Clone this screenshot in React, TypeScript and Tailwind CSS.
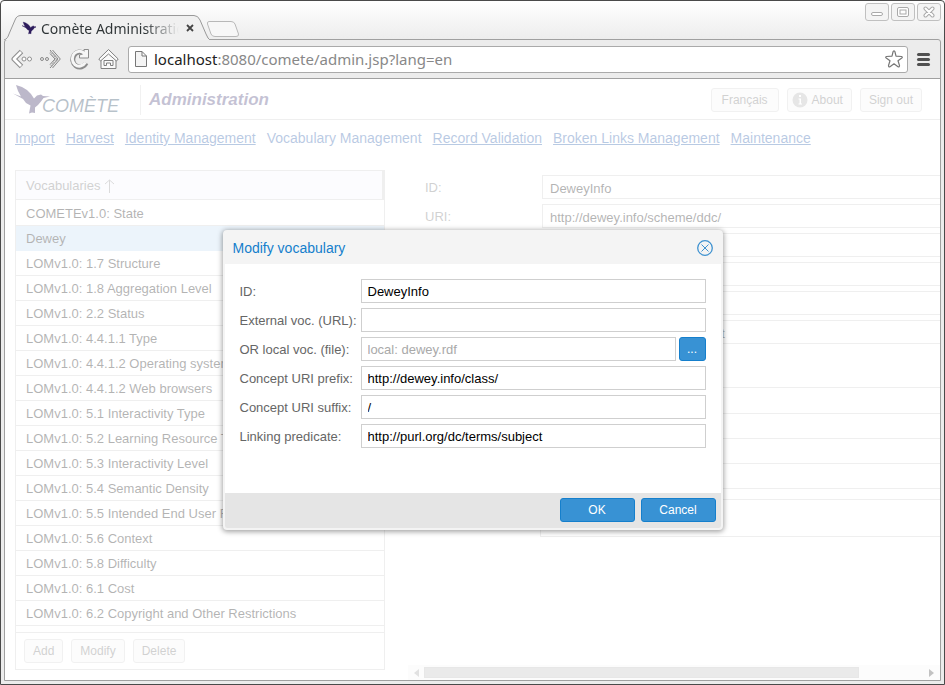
import type { ReactNode } from "react";

const BIRD =
  "M3 0 L9 2 L14 5 L18 9 L21 13.500 L24 10.500 L28 9.500 L30 11 L37 11.500 L30.500 13 L28 16.500 L25 20 L22 22.500 L22 28 L19 27.500 L16 28.500 L17.500 20.500 L13 18 L10 14 L0 8.500 L8 11.500 L5 6 Z";

const vocabularies = [
  "COMETEv1.0: State",
  "Dewey",
  "LOMv1.0: 1.7 Structure",
  "LOMv1.0: 1.8 Aggregation Level",
  "LOMv1.0: 2.2 Status",
  "LOMv1.0: 4.4.1.1 Type",
  "LOMv1.0: 4.4.1.2 Operating systems",
  "LOMv1.0: 4.4.1.2 Web browsers",
  "LOMv1.0: 5.1 Interactivity Type",
  "LOMv1.0: 5.2 Learning Resource Type",
  "LOMv1.0: 5.3 Interactivity Level",
  "LOMv1.0: 5.4 Semantic Density",
  "LOMv1.0: 5.5 Intended End User Role",
  "LOMv1.0: 5.6 Context",
  "LOMv1.0: 5.8 Difficulty",
  "LOMv1.0: 6.1 Cost",
  "LOMv1.0: 6.2 Copyright and Other Restrictions",
];

const sections = [
  "Import",
  "Harvest",
  "Identity Management",
  "Vocabulary Management",
  "Record Validation",
  "Broken Links Management",
  "Maintenance",
];

const details = [
  { id: "d-id", label: "ID:", value: "DeweyInfo" },
  { id: "d-uri", label: "URI:", value: "http://dewey.info/scheme/ddc/" },
  { id: "d-source", label: "Source:", value: "" },
  { id: "d-prefix", label: "Prefix:", value: "" },
  { id: "d-suffix", label: "Suffix:", value: "" },
  { id: "d-link", label: "Linking:", value: "http://purl.org/dc/terms/subject" },
];

function SoftButton({ children, className = "px-2" }: { children: ReactNode; className?: string }) {
  return (
    <button className={`flex h-6 items-center gap-1 rounded-[3px] border border-[#cfcfcf] bg-[#f4f4f4] text-[12px] text-[#666] ${className}`}>
      {children}
    </button>
  );
}

function BlueButton({ children, className }: { children: ReactNode; className: string }) {
  return (
    <button
      type="button"
      className={`h-6 shrink-0 rounded-[3px] border border-[#157fcc] bg-[#3892d4] text-center text-[12px] leading-[22px] text-white ${className}`}
    >
      {children}
    </button>
  );
}

function FieldRow({ id, label, children }: { id: string; label: string; children: ReactNode }) {
  return (
    <div className="flex h-6 items-center">
      <label htmlFor={id} className="w-[121px] shrink-0 pt-0.5 text-[13px] whitespace-nowrap text-[#666]">
        {label}
      </label>
      {children}
    </div>
  );
}

const fieldClass = "h-6 min-w-0 flex-1 border border-[#cfcfcf] bg-white px-1.5 pt-0.5 text-[13px] text-black";
const windowButton = "flex h-[18px] w-6 items-center justify-center rounded-[3px] border border-[#c0c0c0] bg-[#f4f4f4]";

function TitleBar() {
  return (
    <div className="flex h-[38px] shrink-0 items-start justify-between">
      <div className="flex h-[38px] items-end">
        <div className="relative h-6 w-[202px]">
          <svg className="absolute inset-0" width="205" height="25" viewBox="0 0 205 25" fill="none">
            <path d="M0 25 C3 24 4 22 5 19 L11 5 Q12.500 .5 17 .5 H190 Q194 .5 196 5 L202 19 Q204 24 206 25 Z" fill="#f0f0f0" />
            <path d="M0 25 C3 24 4 22 5 19 L11 5 Q12.500 .5 17 .5 H190 Q194 .5 196 5 L202 19 Q204 24 206 25" stroke="#999" />
          </svg>
          <div className="relative flex h-[26px] items-center pl-[18px]">
            <svg width="14" height="15" viewBox="0 0 34 31">
              <path d={BIRD} fill="#2d1c5c" stroke="#2d1c5c" />
            </svg>
            <span className="ml-[5px] w-[138px] overflow-hidden bg-linear-to-r from-[#2e3436] from-75% to-transparent bg-clip-text font-['Noto_Sans',sans-serif] text-[14px] whitespace-nowrap text-transparent">
              Comète Administration
            </span>
            <button aria-label="Close tab" className="ml-[7px]">
              <svg width="8" height="8" viewBox="0 0 8 8" stroke="#444" strokeWidth="1.800">
                <path d="M1 1 L7 7 M7 1 L1 7" />
              </svg>
            </button>
          </div>
        </div>
        <button aria-label="New tab" className="mb-px">
          <svg width="34" height="17" viewBox="0 0 34 17">
            <path d="M3 .5 H25 Q28 .5 29 3 L32.500 13 Q33 15.500 30 15.500 H9 Q6 15.500 5 13 L1.500 3 Q1 .5 3 .5Z" fill="#f7f7f7" stroke="#b8b8b8" />
          </svg>
        </button>
      </div>
      <div className="flex gap-0.5 pt-0.5">
        <button aria-label="Minimize" className={windowButton}>
          <svg width="12" height="12" fill="#fff" stroke="#aaa"><rect x=".5" y="6.500" width="11" height="3" rx="1.500" /></svg>
        </button>
        <button aria-label="Maximize" className={windowButton}>
          <svg width="12" height="12" fill="#fff" stroke="#aaa"><rect x=".5" y="1.500" width="11" height="9" rx="1.500" /><rect x="3" y="4" width="6" height="4" /></svg>
        </button>
        <button aria-label="Close" className={windowButton}>
          <svg width="12" height="12" strokeLinecap="round"><path d="M2.500 2.500 L9.500 9.500 M9.500 2.500 L2.500 9.500" stroke="#aaa" strokeWidth="4" /><path d="M2.500 2.500 L9.500 9.500 M9.500 2.500 L2.500 9.500" stroke="#fff" strokeWidth="2" /></svg>
        </button>
      </div>
    </div>
  );
}

function Toolbar() {
  return (
    <div className="flex h-[39px] shrink-0 items-center border-b border-[#a0a0a0] pr-2.5 pl-1.5">
      <div className="flex gap-2">
        <button aria-label="Back">
          <svg width="21" height="22" viewBox="0 0 21 22" fill="none" strokeLinejoin="round">
            <path d="M10.500 3.500 L3 11 L10.500 18.500" stroke="#909090" strokeWidth="5" />
            <path d="M10 4 L3 11 L10 18" stroke="#fff" strokeWidth="2.800" />
            <circle cx="13" cy="11" r="2" fill="#fff" stroke="#909090" />
            <circle cx="18.500" cy="11" r="2" fill="#fff" stroke="#909090" />
          </svg>
        </button>
        <button aria-label="Forward">
          <svg width="21" height="22" viewBox="0 0 21 22" fill="none">
            <path d="M10 2 L18 11 L10 20 M12.500 2 L20.300 11 L12.500 20" stroke="#858585" />
            <path d="M10 5.500 L15 11 L10 16.500" stroke="#858585" />
            <path d="M10.500 3.500 L17 11 L10.500 18.500" stroke="#a8a8a8" strokeWidth="2.500" strokeDasharray="1 1" />
            <circle cx="2" cy="11" r="1.500" stroke="#888" />
            <circle cx="7" cy="11" r="1.500" stroke="#888" />
          </svg>
        </button>
        <button aria-label="Reload">
          <svg width="21" height="22" viewBox="0 0 21 22" fill="none">
            <path d="M15.500 6 A7 7.500 0 1 0 17 15" stroke="#8c8c8c" strokeWidth="5" />
            <path d="M15 1.500 H19.500 V10 H10.500 V7 L15 5.500Z" fill="#f6f6f6" stroke="#8c8c8c" />
            <path d="M16 6.300 A7 7.500 0 1 0 16.300 14.600" stroke="#f6f6f6" strokeWidth="3" />
          </svg>
        </button>
        <button aria-label="Home">
          <svg width="21" height="22" viewBox="0 0 21 22" fill="#fafafa" stroke="#808080" strokeLinejoin="round">
            <path d="M3 11 V20.500 H18 V11 L10.500 5Z" />
            <path d="M10.500 1.500 L.8 11 L2.500 13 L10.500 6 L18.500 13 L20.200 11Z" />
            <path d="M6 17.500 V12.500 H15 V17.500 H12.500 V15 H8.500 V17.500Z" />
          </svg>
        </button>
      </div>
      <div className="ml-[9px] flex h-[27px] min-w-0 flex-1 items-center rounded-[3px] border border-[#aaa] bg-white pr-1 pl-1.5">
        <svg width="12" height="16" viewBox="0 0 12 16" fill="#f4f4f4" stroke="#777"><path d="M.5 .5 H7 L11.500 5 V15.500 H.5Z M7 .5 V5 H11.500" /></svg>
        <span className="ml-[7px] flex-1 font-['Noto_Sans',sans-serif] text-[15px] text-[#888]">
          <span className="text-[#222]">localhost</span>:8080/comete/admin.jsp?lang=en
        </span>
        <button aria-label="Bookmark">
          <svg width="18" height="18" viewBox="0 0 18 18" fill="#fff" stroke="#777" strokeWidth="1.200" strokeLinejoin="round"><path d="M9 .8 Q9.800 .8 10 2 L11 6.200 L16.500 6.500 Q18 7 16.800 8 L13 10.800 L14.500 15.500 Q14.500 17.400 13 16.700 L9 13.800 L5 16.700 Q3.500 17.400 3.500 15.500 L5 10.800 L1.200 8 Q0 7 1.500 6.500 L7 6.200 L8 2 Q8.200 .8 9 .8Z" /></svg>
        </button>
      </div>
      <button aria-label="Menu" className="ml-[9px] flex w-[13px] flex-col gap-0.5">
        <span className="h-[3px] w-full rounded-sm bg-[#505050]" />
        <span className="h-[3px] w-full rounded-sm bg-[#505050]" />
        <span className="h-[3px] w-full rounded-sm bg-[#505050]" />
      </button>
    </div>
  );
}

function VocabularyPanel() {
  return (
    <section className="flex h-[500px] w-[370px] shrink-0 flex-col border border-[#c8c8c8]">
      <h2 className="flex h-[29px] shrink-0 items-center gap-1 border-r-2 border-b border-[#c8c8c8] bg-[#f3f5fc] px-2.5 pt-px text-[13px] text-[#666]">
        Vocabularies
        <svg width="10" height="14" fill="none" stroke="#888"><path d="M5.500 14 V1 M1 5 L5.500 1 L10 5" /></svg>
      </h2>
      <ul className="flex-1 pt-px text-[13px]">
        {vocabularies.map((name) => (
          <li
            key={name}
            className={`h-[25px] border-b px-2.5 leading-[25px] ${name === "Dewey" ? "border-[#c0daf2] bg-[#c0daf2]" : "border-[#c8c8c8]"}`}
          >
            {name}
          </li>
        ))}
      </ul>
      <div className="flex h-[37px] shrink-0 items-center gap-2 border-t border-[#c8c8c8] px-2">
        <SoftButton>Add</SoftButton>
        <SoftButton>Modify</SoftButton>
        <SoftButton>Delete</SoftButton>
      </div>
    </section>
  );
}

function HorizontalScrollbar() {
  return (
    <div className="flex h-[15px] shrink-0 items-center bg-[#f3f3f3] px-1.5">
      <svg width="5" height="8" fill="#999"><path d="M5 0 V8 L0 4Z" /></svg>
      <div className="mx-[5px] flex-1">
        <div className="h-[11px] w-[87%] border border-[#b0b0b0] bg-[#bababa]" />
      </div>
      <svg width="5" height="8" fill="#333"><path d="M0 0 V8 L5 4Z" /></svg>
    </div>
  );
}

function Details() {
  return (
    <section className="flex min-w-0 flex-1 flex-col overflow-hidden">
      <div className="flex min-h-0 flex-1 flex-col overflow-hidden pl-[17px]">
        <div className="flex shrink-0 flex-col gap-[5px] pt-[5px]">
          {details.map((d) => (
            <div key={d.id} className="flex h-6 items-center">
              <label htmlFor={d.id} className="w-[117px] shrink-0 pt-0.5 text-[13px] text-[#666]">{d.label}</label>
              <input
                id={d.id}
                readOnly
                defaultValue={d.value}
                className="h-6 w-[600px] shrink-0 border border-[#c8c8c8] px-[7px] pt-0.5 text-[13px]"
              />
            </div>
          ))}
        </div>
        <div className="mt-[43px] ml-[115px] h-[150px] w-[602px] shrink-0 border border-[#c8c8c8]">
          <div className="h-[26px] border-b border-[#c8c8c8]" />
          <div className="h-[25px] border-b border-[#c8c8c8]" />
          <div className="h-[25px] border-b border-[#c8c8c8]" />
          <div className="h-[25px] border-b border-[#c8c8c8]" />
          <div className="h-[11px] border-b border-[#c8c8c8]" />
        </div>
      </div>
      <HorizontalScrollbar />
    </section>
  );
}

function Dialog() {
  return (
    <div
      role="dialog"
      aria-label="Modify vocabulary"
      className="flex h-[300px] w-[500px] flex-col overflow-hidden rounded-[4px] border-2 border-[#f4f4f4] bg-white shadow-[0_1px_5px_1px_rgba(0,0,0,0.35)]"
    >
      <div className="flex h-8 shrink-0 items-center justify-between bg-[#f4f4f4] px-2">
        <h2 className="pt-px text-[14px] text-[#157fcc]">Modify vocabulary</h2>
        <button aria-label="Close dialog">
          <svg width="16" height="16" viewBox="0 0 16 16" fill="none" stroke="#3f92d0"><circle cx="8" cy="8" r="7.300" strokeWidth="1.300" /><path d="M4.500 4.500 L11.500 11.500 M11.500 4.500 L4.500 11.500" /></svg>
        </button>
      </div>
      <form className="flex flex-1 flex-col gap-[5px] px-[15px] pt-[15px]">
        <FieldRow id="id" label="ID:">
          <input id="id" defaultValue="DeweyInfo" className={fieldClass} />
        </FieldRow>
        <FieldRow id="url" label="External voc. (URL):">
          <input id="url" className={fieldClass} />
        </FieldRow>
        <FieldRow id="file" label="OR local voc. (file):">
          <input id="file" placeholder="local: dewey.rdf" className={`${fieldClass} placeholder:text-[#a9a9a9]`} />
          <BlueButton className="ml-[3px] w-[27px]">...</BlueButton>
        </FieldRow>
        <FieldRow id="prefix" label="Concept URI prefix:">
          <input id="prefix" defaultValue="http://dewey.info/class/" className={fieldClass} />
        </FieldRow>
        <FieldRow id="suffix" label="Concept URI suffix:">
          <input id="suffix" defaultValue="/" className={fieldClass} />
        </FieldRow>
        <FieldRow id="predicate" label="Linking predicate:">
          <input id="predicate" defaultValue="http://purl.org/dc/terms/subject" className={fieldClass} />
        </FieldRow>
      </form>
      <div className="flex h-[35px] shrink-0 items-center justify-end gap-1.5 bg-[#e5e5e5] pr-[5px]">
        <BlueButton className="w-[75px]">OK</BlueButton>
        <BlueButton className="w-[75px]">Cancel</BlueButton>
      </div>
    </div>
  );
}

export default function App() {
  return (
    <div className="flex h-screen min-h-[640px] flex-col overflow-hidden rounded-t-[4px] border border-[#4a4a4a] bg-[#ececec] bg-linear-to-b from-white to-[#ececec] to-[40px] px-[3px] pb-[3px] font-['Liberation_Sans',Arial,sans-serif]">
      <TitleBar />
      <main className="flex min-h-0 flex-1 flex-col rounded-t-[3px] border border-[#a0a0a0] bg-[#ececec]">
        <Toolbar />
        <div className="relative flex min-h-0 flex-1 flex-col bg-white">
          <header className="flex h-[41px] shrink-0 items-center border-b border-[#c8c8c8] pt-0.5 pr-[18px] pl-2">
            <div className="flex h-[30px] w-[128px] items-end border-r border-[#d0d0d0]">
              <svg width="120" height="30" viewBox="0 0 120 30" role="img" aria-label="Comète" className="overflow-visible">
                <path d={BIRD} fill="#21134f" />
                <text x="29" y="27" fontSize="18" fontStyle="italic" fill="#10324f">COMÈTE</text>
              </svg>
            </div>
            <h1 className="ml-2 flex-1 text-[17px] font-bold text-[#3b3270] italic">Administration</h1>
            <div className="flex gap-2">
              <SoftButton className="px-2.5">Français</SoftButton>
              <SoftButton className="pr-2 pl-1">
                <svg width="16" height="16" viewBox="0 0 16 16">
                  <circle cx="8" cy="8" r="7.500" fill="#aaa" />
                  <path d="M6.500 6.500 H9 V11.500 H10 V12.500 H6.500 V11.500 H7.500 V7.500 H6.500Z M7 3 H9 V5 H7Z" fill="#fff" />
                </svg>
                About
              </SoftButton>
              <SoftButton>Sign out</SoftButton>
            </div>
          </header>
          <nav className="flex h-[50px] shrink-0 gap-[11px] pt-2 pl-2.5 text-[14px] whitespace-nowrap text-[#124ea2]">
            {sections.map((s) =>
              s === "Vocabulary Management" ? <span key={s}>{s}</span> : <a key={s} href="#" className="underline">{s}</a>,
            )}
          </nav>
          <div className="flex min-h-0 flex-1 gap-[23px] overflow-hidden pl-2.5">
            <VocabularyPanel />
            <Details />
          </div>
          <div className="absolute inset-0 flex items-center justify-center bg-white/70">
            <Dialog />
          </div>
        </div>
      </main>
    </div>
  );
}
